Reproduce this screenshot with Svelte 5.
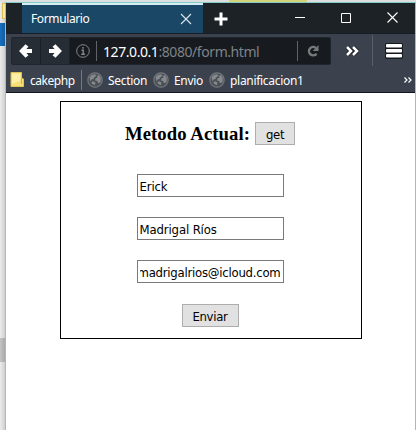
<script>
  const bookmarks = [
    { name: 'Section', width: 66 },
    { name: 'Envio', width: 56 },
    { name: 'planificacion1', width: 100 }
  ];
</script>

{#snippet globe()}
  <svg class="globe" width="16" height="16" viewBox="0 0 16 16">
    <circle cx="8" cy="8" r="7.2" fill="#4b5056" stroke="#74787d" stroke-width="1.2" />
    <path d="M2.500 5.500 4.500 3 8 2.300l1.500 1.500-2.500 1.700-.500 1.500-2 .5-1 2zM10 4l2-1 1.800 3-.2 4-2 1.500-1.600-2.500-2-.5.500-2 2-1zM4.500 10l2-.8 2 1.600-.5 2.200-3-1z" fill="#85898e" />
  </svg>
{/snippet}

<div class="screen">
  <div class="behind">
    <div class="folder-edge"></div>
    <div class="blue-edge"></div>
    <div class="scroll-thumb"></div>
  </div>
  <div class="window">
    <div class="titlebar">
      <div class="tab">
        <span class="tab-title">Formulario</span>
        <svg width="12" height="12" viewBox="0 0 12 12"><path d="M1 1l10 10M11 1 1 11" stroke="#dce6ed" stroke-width="1.1" /></svg>
      </div>
      <svg class="plus" width="14" height="14" viewBox="0 0 14 14"><path d="M7 .5v13M.5 7h13" stroke="#fff" stroke-width="3" /></svg>
      <div class="controls">
        <svg width="10" height="10" viewBox="0 0 10 10"><path d="M0 4.500h10" stroke="#fff" /></svg>
        <svg width="10" height="10" viewBox="0 0 10 10"><path d="M.5.5h9v9h-9z" fill="none" stroke="#fff" /></svg>
        <svg width="11" height="11" viewBox="0 0 11 11"><path d="M.5.5l10 10M10.500.5l-10 10" stroke="#fff" stroke-width="1.1" /></svg>
      </div>
    </div>

    <div class="navbar">
      <div class="urlgroup">
        <div class="arrow"><svg width="14" height="14" viewBox="0 0 14 14"><path d="M8 1.500 2.800 7 8 12.500M3 7h10" fill="none" stroke="#fff" stroke-width="4" /></svg></div>
        <div class="arrow"><svg width="14" height="14" viewBox="0 0 14 14"><path d="M6 1.500 11.200 7 6 12.500M11 7H1" fill="none" stroke="#fff" stroke-width="4" /></svg></div>
        <svg class="info" width="14" height="14" viewBox="0 0 14 14"><circle cx="7" cy="7" r="6.300" fill="none" stroke="#85888b" /><path d="M7 3v1.700M5.500 6.300h1.700v4M5.300 10.300h3.600" fill="none" stroke="#85888b" stroke-width="1.400" /></svg>
        <i class="divider"></i>
        <span class="url"><b>127.0.0.1</b>:8080/form.html</span>
        <i class="divider dim"></i>
        <svg class="reload" width="12" height="12" viewBox="0 0 12 12"><path d="M8.800 2.900A4.200 4.200 0 1 0 9.500 8.800" fill="none" stroke="#777a7d" stroke-width="2.400" /><path d="M11.500 0v6H5.800z" fill="#777a7d" /></svg>
      </div>
      <svg class="more" width="14" height="12" viewBox="0 0 14 12"><path d="M2 2 6 6l-4 4M8 2l4 4-4 4" fill="none" stroke="#171b20" stroke-width="4.200" /><path d="M2 2 6 6l-4 4M8 2l4 4-4 4" fill="none" stroke="#fff" stroke-width="2.600" /></svg>
      <i class="navline"></i>
      <svg class="menu" width="18" height="16" viewBox="0 0 18 16"><g fill="#15191e"><rect width="18" height="6" rx="2" /><rect y="5" width="18" height="6" rx="2" /><rect y="10" width="18" height="6" rx="2" /></g><g fill="#fff"><rect x="1" y="1" width="16" height="3.500" rx="1" /><rect x="1" y="6" width="16" height="3.500" rx="1" /><rect x="1" y="11" width="16" height="3.500" rx="1" /></g></svg>
    </div>

    <div class="bookmarks">
      <svg class="folder" width="14" height="16" viewBox="0 0 14 16"><path d="M1 .5h10.500v5.500l2 1v7.500H1z" fill="#f5df76" stroke="#e1c551" /><path d="M2 1.500h8.500v7L2 12z" fill="#fff0a7" /><path d="M11.500 6v6" stroke="#cfaf3c" /></svg>
      <span class="cake">cakephp</span>
      <i class="bookline"></i>
      {#each bookmarks as item}
        <div class="bookmark" style:width="{item.width}px">{@render globe()}<span>{item.name}</span></div>
      {/each}
      <svg class="overflow" width="8" height="6" viewBox="0 0 8 6"><path d="M.5.500 3 3 .5 5.500M4.500.500 7 3 4.500 5.500" fill="none" stroke="#fff" stroke-width="1.200" /></svg>
    </div>

    <main>
      <form onsubmit={(e) => e.preventDefault()}>
        <h3>Metodo Actual: <button type="button" class="get">get</button></h3>
        <div class="field">Erick</div>
        <div class="field">Madrigal Ríos</div>
        <div class="field mail"><span>madrigalrios@icloud.com</span></div>
        <button class="send">Enviar</button>
      </form>
    </main>
  </div>
</div>

<style>
  :global(body) { margin: 0; overflow: hidden; }
  * { box-sizing: border-box; }
  svg, i { display: block; flex: none; }
  .screen { width: 416px; height: 430px; display: flex; padding-top: 2px; background: linear-gradient(90deg, #dedede 229px, #d5d378 229px 307px, #dedede 307px); font-family: "Noto Sans", sans-serif; }
  .behind { width: 5px; height: 428px; flex: none; background: linear-gradient(90deg, #ececec, #cfcfcf); }
  .folder-edge { width: 3px; height: 16px; margin: 1px 0 4px 2px; border: 1px solid #d9bd55; border-right: 0; background: #f5e6a0; }
  .blue-edge { height: 23px; background: linear-gradient(90deg, #1670c2, #145b9d); }
  .scroll-thumb { height: 24px; margin-top: 292px; background: linear-gradient(90deg, #c5c5c5, #aaa); }
  .window { width: 411px; height: 428px; border: solid #83cbc9; border-width: 1px 1px 0; background: #fff; }
  .titlebar { height: 31px; display: flex; background: #1d2226; border-bottom: 1px solid #171d27; padding-left: 16px; }
  .tab { width: 181px; height: 30px; border-top: 2px solid #d5eef4; background: #1a4766; display: flex; align-items: center; justify-content: space-between; padding: 0 11px 0 9px; color: #fff; font-size: 12px; }
  .tab-title { line-height: 18px; letter-spacing: -.38px; }
  .plus { margin: 9px 0 0 11px; }
  .controls { display: flex; align-items: center; gap: 36px; margin: 0 0 1px 67px; }
  .navbar { height: 33px; display: flex; align-items: center; background: #3b424d; padding-left: 5px; }
  .urlgroup { width: 320px; height: 28px; flex: none; display: flex; align-items: center; background: #171b1f; border: 1px solid #20262d; border-radius: 2px; }
  .arrow { width: 29px; height: 26px; display: flex; align-items: center; justify-content: center; background: #262d35; border-right: 1px solid #1b2027; }
  .info { margin-left: 6px; }
  .divider { width: 1px; height: 20px; background: #606367; margin-left: 6px; }
  .url { width: 190px; padding-left: 6px; color: #7e8388; font-size: 14px; line-height: 20px; white-space: nowrap; letter-spacing: -.43px; padding-top: 2px; }
  .url b { font-weight: 400; color: #fff; }
  .dim { margin-left: 10px; }
  .reload { margin-left: 9px; }
  .more { margin-left: 14px; }
  .navline { width: 1px; height: 31px; margin-left: 13px; background: #59606a; }
  .menu { margin-left: 12px; }
  .bookmarks { height: 26px; display: flex; align-items: center; background: #3b424d; border-bottom: 1px solid #11161e; padding-left: 4px; color: #fff; font-size: 12px; }
  .cake { width: 56px; flex: none; padding: 2px 0 0 6px; line-height: 18px; letter-spacing: -.45px; }
  .bookline { width: 1px; height: 20px; margin: 0 5px 0 1px; background: #737982; }
  .bookmark { flex: none; display: flex; align-items: center; gap: 5px; white-space: nowrap; letter-spacing: -.3px; line-height: 18px; }
  .bookmark span { padding-top: 2px; }
  .overflow { margin-left: auto; margin-right: 3px; }
  main { padding-top: 8px; padding-left: 54px; }
  form { width: 302px; height: 238px; border: 1px solid #000; display: flex; flex-direction: column; align-items: center; padding: 20px 2px 0 0; }
  h3 { margin: 0 0 29px; height: 23px; display: flex; align-items: center; gap: 5px; font: 700 18.720px/23px "Liberation Serif", serif; white-space: nowrap; letter-spacing: .07px; }
  button { height: 23px; padding: 2px 0 0; border: 1px solid #adadad; background: #e1e1e1; font: 13px/19px "DejaVu Sans Condensed", "DejaVu Sans", sans-serif; font-stretch: condensed; letter-spacing: -.3px; color: #000; }
  .get { width: 40px; }
  .field { width: 147px; height: 23px; margin-bottom: 20px; border: 1px solid #7a7a7a; padding: 2px 2px 0; overflow: hidden; font: 13px/19px "DejaVu Sans Condensed", "DejaVu Sans", sans-serif; font-stretch: condensed; white-space: nowrap; letter-spacing: -.13px; }
  .mail { margin-bottom: 21px; letter-spacing: -.24px; }
  .mail span { display: flex; justify-content: flex-end; overflow: hidden; }
  .send { width: 57px; }
</style>
